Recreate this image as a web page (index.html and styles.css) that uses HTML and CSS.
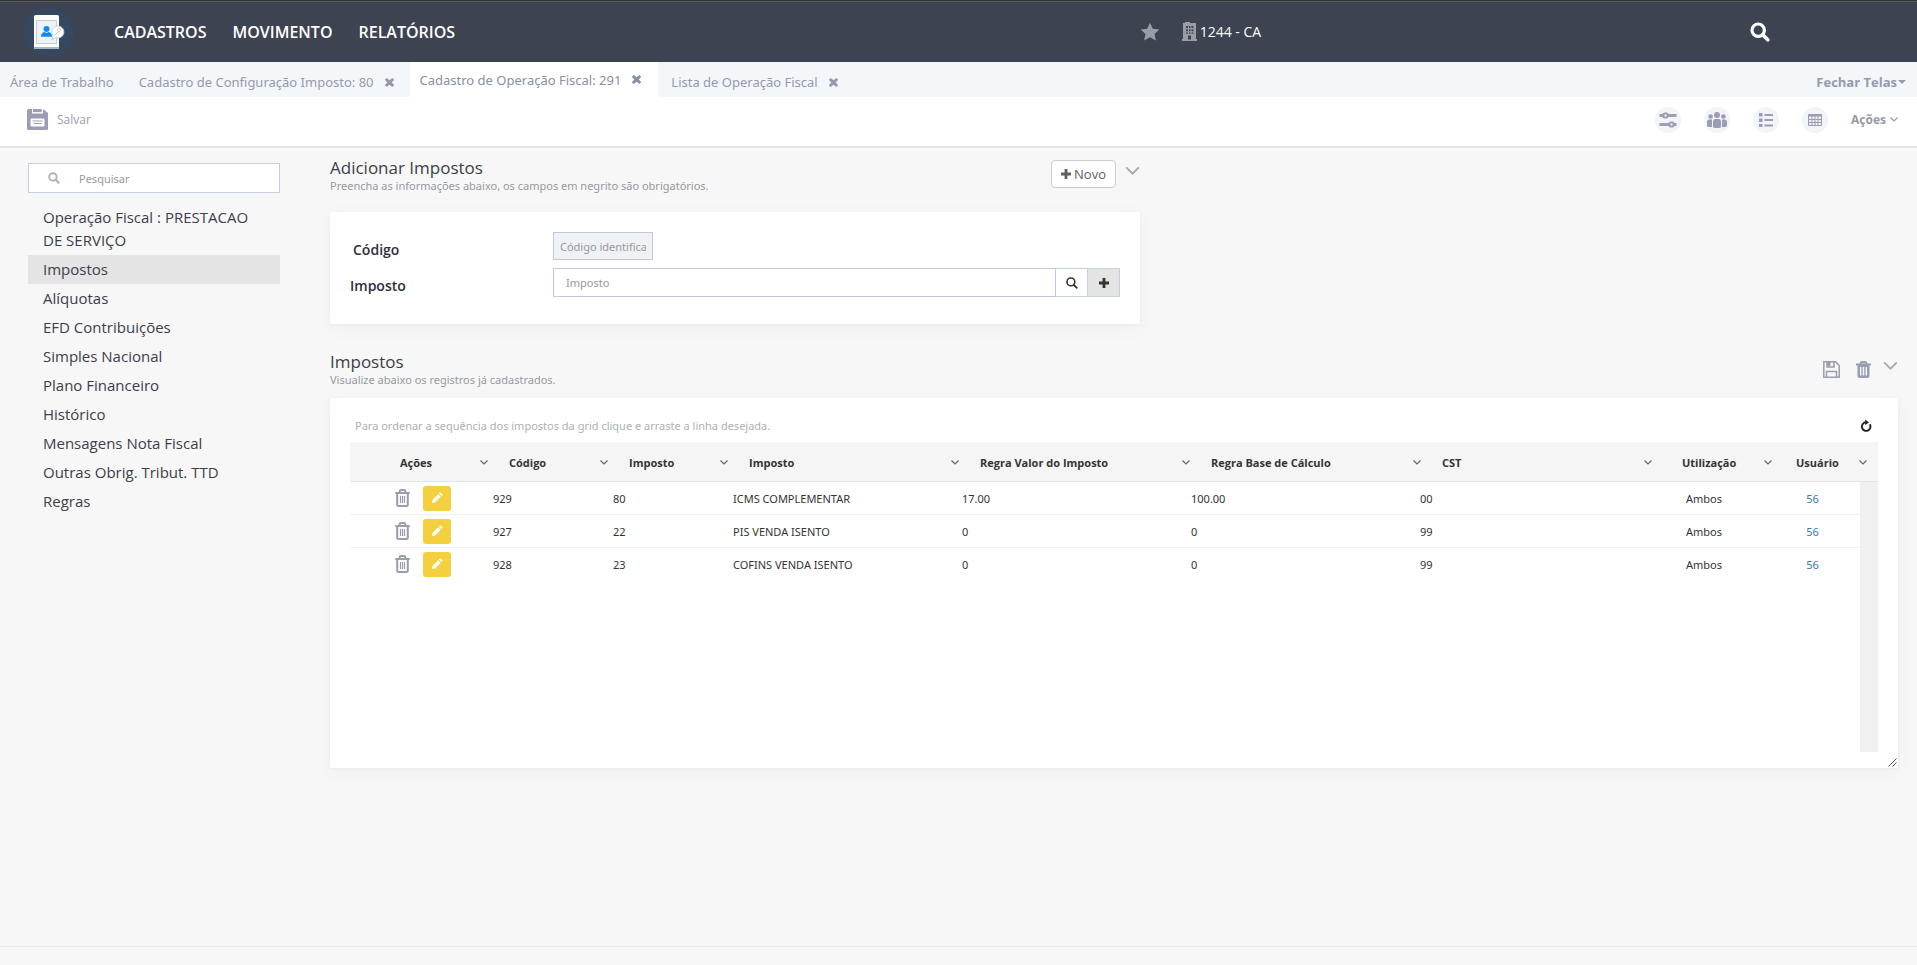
FILE: index.html
```html
<!DOCTYPE html>
<html lang="pt-BR">
<head>
<meta charset="utf-8">
<meta name="viewport" content="width=device-width, initial-scale=1">
<title>Cadastro de Operação Fiscal</title>
<link rel="stylesheet" href="styles.css">
</head>
<body>
<svg class="sprite" aria-hidden="true">
  <symbol id="close" viewBox="0 0 12 12"><path d="M3 1 6 3.600 9 1 11.200 3 8.400 6 11.200 9 9 11 6 8.400 3 11 .8 9 3.600 6 .8 3z"/></symbol>
  <symbol id="chevron" viewBox="0 0 16 10"><path d="M1 1.500 8 8.500 15 1.500" fill="none" stroke="currentColor" stroke-width="2"/></symbol>
  <symbol id="chevron-s" viewBox="0 0 8 5"><path d="M.5.5 4 4 7.500.5" fill="none" stroke="currentColor" stroke-width="1.200"/></symbol>
  <symbol id="search" viewBox="0 0 20 20"><circle cx="8.200" cy="8.200" r="6.200" fill="none" stroke="currentColor" stroke-width="3.200"/><path d="m13 13 4.800 4.800" stroke="currentColor" stroke-width="3.600" stroke-linecap="round"/></symbol>
  <symbol id="search-thin" viewBox="0 0 20 20"><circle cx="8.200" cy="8.200" r="6.500" fill="none" stroke="currentColor" stroke-width="2.600"/><path d="m13 13 5 5" stroke="currentColor" stroke-width="3" stroke-linecap="round"/></symbol>
  <symbol id="plus" viewBox="0 0 10 10"><path d="M3.600 0h2.800v3.600H10v2.800H6.400V10H3.600V6.400H0V3.600h3.600z"/></symbol>
  <symbol id="trash" viewBox="0 0 15 18"><path d="M4.700 3V2.200Q4.700 1 6 1h3q1.300 0 1.300 1.200V3M.3 3.900h14.400M2.200 5v10.500q0 1.500 1.500 1.500h7.600q1.500 0 1.500-1.500V5" fill="none" stroke="currentColor" stroke-width="2"/><path d="M5.500 7v7M7.500 7v7M9.500 7v7" stroke="currentColor" stroke-width="1.200"/></symbol>
  <symbol id="trash-bold" viewBox="0 0 15 17"><path d="M4.700 3V1.900Q4.700 1 6 1h3q1.300 0 1.300.9V3M0 3.600h15" fill="none" stroke="currentColor" stroke-width="2"/><path fill="currentColor" fill-rule="evenodd" d="M1.500 4h12v11q0 2-2 2h-8q-2 0-2-2zM4 6v8.500h1.400V6zm2.800 0v8.500h1.400V6zm2.800 0v8.500H11V6z"/></symbol>
  <symbol id="pencil" viewBox="0 0 12 12"><path d="m1 11 .6-3.200L7.200 2.200l2.600 2.600-5.600 5.600zM7.900 1.500l.8-.8q.7-.5 1.300.1l1.200 1.200q.6.600.1 1.300l-.8.800z"/></symbol>
</svg>

<header class="topbar">
  <a class="logo" href="#" aria-label="Início">
    <svg viewBox="0 0 50 50" width="50" height="50">
      <circle cx="25" cy="25" r="25" fill="#34495f"/>
      <rect x="10" y="8" width="25" height="34" rx="1.500" fill="#fff"/>
      <path d="M10 40h25v.5q0 1.500-1.500 1.500h-22Q10 42 10 40.500z" fill="#a9b6c2"/>
      <rect x="12.500" y="13.500" width="20" height="23" fill="#eff2f9" stroke="#c3cedb"/>
      <circle cx="22.500" cy="22" r="3" fill="#0b8df8"/>
      <path d="M17 29.800q0-4.300 3.600-4.800l1.900 1 1.900-1q3.600.5 3.600 4.800z" fill="#0b8df8"/>
      <path d="M34 19a6 6 0 1 1-2.500 11.500L28 33l1-4.500A6 6 0 0 1 34 19z" fill="#fff" stroke="#c3cedb"/>
      <path d="m30.500 28.500 4-4m0 0a1.600 1.600 0 1 1 2-2 1.600 1.600 0 0 1-2 2" fill="none" stroke="#b9c5d3"/>
    </svg>
  </a>
  <nav class="menu">
    <a href="#">CADASTROS</a>
    <a href="#">MOVIMENTO</a>
    <a href="#">RELATÓRIOS</a>
  </nav>
  <div class="company">
    <button type="button" class="plain" aria-label="Favoritos"><svg width="20" height="20" viewBox="0 0 20 20" fill="currentColor"><path d="m10 .8 2.800 6 6.600.7-4.900 4.500 1.400 6.500L10 15.300l-5.900 3.200L5.500 12 .6 7.500l6.600-.7z"/></svg></button>
    <div class="company-name">
      <svg width="15" height="19" viewBox="0 0 15 19" fill="currentColor" fill-rule="evenodd"><path d="M3 1V0h5v1h6v16h1v2H0v-2h1V1zm1 3v2h2V4zm3 0v2h1.500V4zm2.500 0v2h2V4zM4 7.200v2h2v-2zm3 0v2h1.500v-2zm2.500 0v2h2v-2zM4 10.400v1.400h2v-1.400zm3 0v1.400h1.500v-1.400zm2.500 0v1.400h2v-1.400zM6 13.500v4h3v-4z"/></svg>
      <span>1244 - CA</span>
    </div>
  </div>
  <button type="button" class="plain find" aria-label="Buscar"><svg width="20" height="20"><use href="#search"/></svg></button>
</header>

<div class="tabs">
  <a class="tab" href="#">Área de Trabalho</a>
  <div class="tab"><a href="#">Cadastro de Configuração Imposto: 80</a><button type="button" class="plain" aria-label="Fechar"><svg width="11" height="11" fill="currentColor"><use href="#close"/></svg></button></div>
  <div class="tab active"><a href="#">Cadastro de Operação Fiscal: 291</a><button type="button" class="plain" aria-label="Fechar"><svg width="11" height="11" fill="currentColor"><use href="#close"/></svg></button></div>
  <div class="tab"><a href="#">Lista de Operação Fiscal</a><button type="button" class="plain" aria-label="Fechar"><svg width="11" height="11" fill="currentColor"><use href="#close"/></svg></button></div>
  <button type="button" class="plain close-all">Fechar Telas<svg width="8" height="4" viewBox="0 0 8 4" fill="currentColor"><path d="M0 0h8L4 4z"/></svg></button>
</div>

<div class="toolbar">
  <button type="button" class="plain save">
    <svg width="21" height="21" viewBox="0 0 21 21"><path d="M1.500 0H5v4.500h11V0l5 4v15.500q0 1.500-1.500 1.500h-18Q0 21 0 19.500v-18Q0 0 1.500 0z" fill="#9a9db3"/><path d="M6 0h9v3.500H6z" fill="#9a9db3"/><path d="M15 0v3.500H6" fill="none" stroke="#fff" stroke-width=".8"/><rect x="3.500" y="9.500" width="14" height="8" rx="1" fill="#fff"/><path d="M5.500 12h10M6.500 14.500h8" stroke="#9a9db3" stroke-width="1.200"/></svg>
    <span>Salvar</span>
  </button>
  <div class="tools">
    <button type="button" class="round" aria-label="Ajustes"><svg width="18" height="16" viewBox="0 0 18 16" fill="none" stroke="#9a9db3"><path d="M.5 3.500H4M9 3.500h8.500M.5 12.500H10M15 12.500h2.500" stroke-width="3"/><rect x="4.500" y="1.500" width="4" height="4" stroke-width="2" rx="1"/><rect x="10.500" y="10.500" width="4" height="4" stroke-width="2" rx="1"/></svg></button>
    <button type="button" class="round" aria-label="Usuários"><svg width="20" height="16" viewBox="0 0 20 16" fill="#9a9db3"><circle cx="10" cy="3" r="3"/><circle cx="3.600" cy="4.500" r="2.300"/><circle cx="16.400" cy="4.500" r="2.300"/><path d="M6 9.500Q6 7 8 7h4q2 0 2 2.500V15q0 1-4 1t-4-1zM0 10.500Q0 7.500 2 7.500h3V15H2q-2 0-2-1.500zM20 10.500q0-3-2-3h-3V15h3q2 0 2-1.500z"/></svg></button>
    <button type="button" class="round" aria-label="Lista"><svg width="14" height="14" viewBox="0 0 14 14" fill="#9a9db3"><path d="M0 0h3.500v3.500H0zM0 5.500h3.500V9H0zM0 11h3.500v3H0zM5.500 1H14v2H5.500zM5.500 6H14v2H5.500zM5.500 11.500H14v2H5.500z"/></svg></button>
    <button type="button" class="round" aria-label="Tabela"><svg width="14" height="12" viewBox="0 0 14 12" fill="none" stroke="#9a9db3"><rect x=".5" y=".5" width="13" height="11" rx="1" stroke-width="1.200"/><path d="M0 1.500h14" stroke-width="2"/><path d="M0 5.500h14M0 8.500h14M4 1v11M7 1v11M10 1v11"/></svg></button>
    <button type="button" class="plain actions">Ações<svg width="8" height="5"><use href="#chevron-s"/></svg></button>
  </div>
</div>

<div class="page">
  <aside class="sidebar">
    <label class="search-box">
      <svg width="12" height="12"><use href="#search"/></svg>
      <input type="search" placeholder="Pesquisar" aria-label="Pesquisar">
    </label>
    <nav class="sections">
      <a href="#">Operação Fiscal : PRESTACAO DE SERVIÇO</a>
      <a href="#" class="current">Impostos</a>
      <a href="#">Alíquotas</a>
      <a href="#">EFD Contribuições</a>
      <a href="#">Simples Nacional</a>
      <a href="#">Plano Financeiro</a>
      <a href="#">Histórico</a>
      <a href="#">Mensagens Nota Fiscal</a>
      <a href="#">Outras Obrig. Tribut. TTD</a>
      <a href="#">Regras</a>
    </nav>
  </aside>

  <main class="content">
    <section class="add">
      <div class="head">
        <div>
          <h2>Adicionar Impostos</h2>
          <p>Preencha as informações abaixo, os campos em negrito são obrigatórios.</p>
        </div>
        <div class="head-tools">
          <button type="button" class="new"><svg width="10" height="10" fill="currentColor"><use href="#plus"/></svg>Novo</button>
          <button type="button" class="plain fold" aria-label="Recolher"><svg width="15" height="9"><use href="#chevron"/></svg></button>
        </div>
      </div>
      <form class="card form">
        <label for="codigo" class="indent">Código</label>
        <input id="codigo" class="code" placeholder="Código identificador" disabled>
        <label for="imposto">Imposto</label>
        <div class="lookup">
          <input id="imposto" placeholder="Imposto">
          <button type="button" aria-label="Procurar"><svg width="12" height="12"><use href="#search-thin"/></svg></button>
          <button type="button" class="grey" aria-label="Adicionar"><svg width="10" height="10" fill="currentColor"><use href="#plus"/></svg></button>
        </div>
      </form>
    </section>

    <section class="registered">
      <div class="head">
        <div>
          <h2>Impostos</h2>
          <p>Visualize abaixo os registros já cadastrados.</p>
        </div>
        <div class="head-tools list-tools">
          <button type="button" class="plain" aria-label="Salvar"><svg width="17" height="17" viewBox="0 0 17 17" fill="none" stroke="currentColor" stroke-width="1.500"><path d="M.8.800h11.700l3.700 3.700v11.700H.8zM3.500 16v-5.500h10V16"/><path d="M4 1v5h7V1" /><path d="M6 1v4" stroke-width="3"/></svg></button>
          <button type="button" class="plain" aria-label="Excluir"><svg width="15" height="17"><use href="#trash-bold"/></svg></button>
          <button type="button" class="plain fold" aria-label="Recolher"><svg width="15" height="9"><use href="#chevron"/></svg></button>
        </div>
      </div>
      <div class="card list">
        <div class="hint">
          <span>Para ordenar a sequência dos impostos da grid clique e arraste a linha desejada.</span>
          <button type="button" class="plain" aria-label="Atualizar"><svg width="12" height="13" viewBox="0 0 12 13"><path d="M9.800 5.300A4.300 4.300 0 1 1 6 3.300" fill="none" stroke="currentColor" stroke-width="1.900"/><path d="M5.200.5 9 3.400 5.200 6z" fill="currentColor"/></svg></button>
        </div>
        <table class="grid-head">
          <colgroup><col class="c-act"><col class="c-n"><col class="c-n"><col><col><col><col><col class="c-n"><col class="c-user"></colgroup>
          <thead>
            <tr>
              <th class="act"><div>Ações<svg width="8" height="5"><use href="#chevron-s"/></svg></div></th>
              <th><div>Código<svg width="8" height="5"><use href="#chevron-s"/></svg></div></th>
              <th><div>Imposto<svg width="8" height="5"><use href="#chevron-s"/></svg></div></th>
              <th><div>Imposto<svg width="8" height="5"><use href="#chevron-s"/></svg></div></th>
              <th><div>Regra Valor do Imposto<svg width="8" height="5"><use href="#chevron-s"/></svg></div></th>
              <th><div>Regra Base de Cálculo<svg width="8" height="5"><use href="#chevron-s"/></svg></div></th>
              <th><div>CST<svg width="8" height="5"><use href="#chevron-s"/></svg></div></th>
              <th class="use"><div>Utilização<svg width="8" height="5"><use href="#chevron-s"/></svg></div></th>
              <th class="user"><div>Usuário<svg width="8" height="5"><use href="#chevron-s"/></svg></div></th>
            </tr>
          </thead>
        </table>
        <div class="viewport">
          <table class="grid-body">
            <colgroup><col class="c-act"><col class="c-n"><col class="c-n"><col><col><col><col><col class="c-n"><col class="c-user"></colgroup>
            <tbody>
              <tr>
                <td><div class="row-tools"><button type="button" class="plain" aria-label="Excluir"><svg width="15" height="18"><use href="#trash"/></svg></button><button type="button" class="edit" aria-label="Editar"><svg width="12" height="12" fill="currentColor"><use href="#pencil"/></svg></button></div></td>
                <td>929</td><td>80</td><td>ICMS COMPLEMENTAR</td><td>17.00</td><td>100.00</td><td>00</td><td class="mid">Ambos</td><td class="mid"><a href="#">56</a></td>
              </tr>
              <tr>
                <td><div class="row-tools"><button type="button" class="plain" aria-label="Excluir"><svg width="15" height="18"><use href="#trash"/></svg></button><button type="button" class="edit" aria-label="Editar"><svg width="12" height="12" fill="currentColor"><use href="#pencil"/></svg></button></div></td>
                <td>927</td><td>22</td><td>PIS VENDA ISENTO</td><td>0</td><td>0</td><td>99</td><td class="mid">Ambos</td><td class="mid"><a href="#">56</a></td>
              </tr>
              <tr>
                <td><div class="row-tools"><button type="button" class="plain" aria-label="Excluir"><svg width="15" height="18"><use href="#trash"/></svg></button><button type="button" class="edit" aria-label="Editar"><svg width="12" height="12" fill="currentColor"><use href="#pencil"/></svg></button></div></td>
                <td>928</td><td>23</td><td>COFINS VENDA ISENTO</td><td>0</td><td>0</td><td>99</td><td class="mid">Ambos</td><td class="mid"><a href="#">56</a></td>
              </tr>
            </tbody>
          </table>
          <div class="track"></div>
        </div>
        <svg class="grip" width="9" height="9" viewBox="0 0 9 9" stroke="#555" aria-hidden="true"><path d="m.5 8.500 8-8M4.500 8.500l4-4"/></svg>
      </div>
    </section>
  </main>
</div>
<footer class="footer"></footer>
</body>
</html>
```
FILE: styles.css
```css
* { box-sizing: border-box; }

body {
  margin: 0;
  min-height: 100vh;
  display: flex;
  flex-direction: column;
  background: #f7f7f7;
  color: #333;
  font-family: "Segoe UI", "Noto Sans", "Open Sans", sans-serif;
  font-size: 13px;
}

a { color: inherit; text-decoration: none; }
svg { display: block; flex: none; }
button, input { font: inherit; color: inherit; margin: 0; }
button { cursor: pointer; }
.sprite { position: absolute; width: 0; height: 0; }
.plain { border: 0; padding: 0; background: none; }

.menu, .company-name, .close-all, .save, .actions, .sections, h2, .form label, .new, th {
  font-family: "Segoe UI", "Open Sans", "Noto Sans", sans-serif;
}

/* Top bar */
.topbar {
  display: flex;
  align-items: center;
  height: 62px;
  padding: 0 147px 0 24px;
  border-top: 1px solid #333;
  box-shadow: inset 0 1px #5c5c62;
  background: #3d4350;
  color: #fff;
}
.menu { display: flex; gap: 26px; margin-left: 40px; font-size: 16px; font-weight: 600; }
.company { display: flex; align-items: center; gap: 22px; margin: 0 28% 0 auto; color: #9a9da6; }
.company-name { display: flex; align-items: center; gap: 3px; }
.company-name span { color: #fff; font-size: 14px; }
.find { color: #fff; }

/* Tabs */
.tabs { display: flex; height: 35px; background: #f3f7fa; color: #9699ae; }
.tab { display: flex; align-items: center; gap: 10px; padding: 5px 15px 0 10px; }
.tab.active { padding: 0 16px 0 10px; background: #fff; color: #8790a6; }
.tab.active + .tab { padding-left: 13px; }
.close-all {
  display: flex;
  align-items: center;
  gap: 1px;
  margin-left: auto;
  padding: 5px 11px 0 0;
  color: #9699ae;
  font-weight: 700;
}

/* Toolbar */
.toolbar {
  display: flex;
  justify-content: space-between;
  align-items: center;
  height: 51px;
  padding: 0 19px 4px 27px;
  border-bottom: 2px solid #e5e5e5;
  background: #fff;
}
.save { display: flex; align-items: center; gap: 9px; color: #9a9db3; font-size: 12px; }
.tools { display: flex; align-items: center; gap: 23px; }
.round {
  display: flex;
  align-items: center;
  justify-content: center;
  width: 26px;
  height: 26px;
  border: 0;
  border-radius: 50%;
  padding: 0;
  background: #f1f4f9;
}
.actions { display: flex; align-items: center; gap: 4px; color: #9699a5; font-size: 12px; font-weight: 700; }

/* Page */
.page { display: flex; flex: 1; align-items: flex-start; padding: 9px 19px 24px 28px; }
.sidebar { width: 252px; margin-right: 50px; padding-top: 6px; flex: none; }
.search-box {
  display: flex;
  align-items: center;
  gap: 19px;
  height: 30px;
  padding-left: 19px;
  border: 1px solid #c6d0e0;
  background: #fff;
  color: #b3b3b3;
}
.search-box input { flex: 1; min-width: 0; border: 0; outline: 0; padding: 0; background: none; font-size: 11px; }
::placeholder { color: #999; opacity: 1; }
.sections { display: flex; flex-direction: column; margin-top: 10px; font-size: 15px; line-height: 23px; color: #3b3e4c; }
.sections a { padding: 3px 15px; }
.sections .current { background: #e4e4e4; }

.content { flex: 1; min-width: 0; }
.add { max-width: 810px; margin-bottom: 27px; }
.head { display: flex; justify-content: space-between; height: 55px; }
.registered .head { height: 47px; }
h2 { margin: 0; font-size: 17px; font-weight: 400; line-height: 22px; color: #3b3e48; }
.head p { margin: 0; font-size: 11px; line-height: 14px; color: #9699a2; }
.head-tools { display: flex; align-items: flex-start; gap: 9px; padding-top: 3px; }
.fold { padding-top: 6px; color: #a9a9a9; }
.new {
  display: flex;
  align-items: center;
  gap: 3px;
  height: 28px;
  padding: 0 9px;
  border: 1px solid #ccc;
  border-radius: 4px;
  background: #fff;
  color: #606060;
}
.list-tools { gap: 16px; padding-top: 10px; color: #9a9db0; }
.list-tools .fold { padding-top: 0; margin-left: -4px; }

.card { border-radius: 2px; background: #fff; box-shadow: 0 1px 3px #e6e9ee, 0 4px 20px #00000009; }
.form {
  display: grid;
  grid-template-columns: 203px 1fr;
  row-gap: 8px;
  padding: 20px 20px 27px;
}
.form label { padding-top: 8px; font-size: 14px; font-weight: 600; line-height: 20px; color: #2e2e38; }
.form .indent { padding-left: 3px; }
.form input { border: 1px solid #c2c8da; border-radius: 0; font-size: 11px; outline: 0; background: #fff; }
.form .code { width: 100px; height: 28px; padding: 0 6px; background: #eef1f6; }
.lookup { display: flex; height: 29px; }
.lookup input { flex: 1; min-width: 0; padding: 0 12px; }
.lookup button {
  display: flex;
  align-items: center;
  justify-content: center;
  width: 32px;
  border: 1px solid #c8d0dd;
  border-left: 0;
  padding: 0;
  background: #fff;
}
.lookup .grey { background: #e4e4e4; }

/* Grid */
.list { position: relative; padding: 16px 20px; }
.hint { display: flex; justify-content: space-between; align-items: center; height: 28px; padding: 0 6px 6px 5px; font-size: 11px; color: #aeb0b4; }
.hint .plain { color: #222; }
table { width: 100%; table-layout: fixed; border-collapse: separate; border-spacing: 0; }
.c-n { width: 120px; }
.grid-head { background: #f5f5f5; }
.grid-head .c-act { width: 146px; }
.grid-head .c-user { width: 98px; }
th { height: 40px; padding: 1px 8px 0 13px; border-bottom: 1px solid #dfe5eb; text-align: left; font-size: 11px; font-weight: 700; color: #333; white-space: nowrap; }
th div { display: flex; align-items: center; justify-content: space-between; }
th svg { color: #666; }
.act { padding-left: 50px; }
.use { padding-left: 22px; }
.user { padding: 1px 11px 0 16px; }
.viewport { display: flex; height: 270px; }
.grid-body { flex: 1; width: 0; align-self: flex-start; font-size: 11px; }
.grid-body .c-act { width: 137px; }
.grid-body .c-user { width: 97px; }
td { height: 33px; padding: 0 0 0 6px; border-bottom: 1px solid #f0f2f4; white-space: nowrap; }
tr:last-child td { border-bottom-color: transparent; }
.mid { padding: 0 0 0 2px; text-align: center; }
.mid a { color: #337ab7; }
.row-tools { display: flex; align-items: center; gap: 13px; padding-left: 39px; color: #9a9daa; }
.edit {
  display: flex;
  align-items: center;
  justify-content: center;
  width: 28px;
  height: 25px;
  border: 0;
  border-radius: 3px;
  padding: 0;
  background: #f4d03f;
  color: #fff;
}
.track { width: 18px; background: #f0f0f0; }
.grip { position: absolute; right: 1px; bottom: 1px; }

.footer { height: 19px; border-top: 1px solid #e4e9ef; }
```
